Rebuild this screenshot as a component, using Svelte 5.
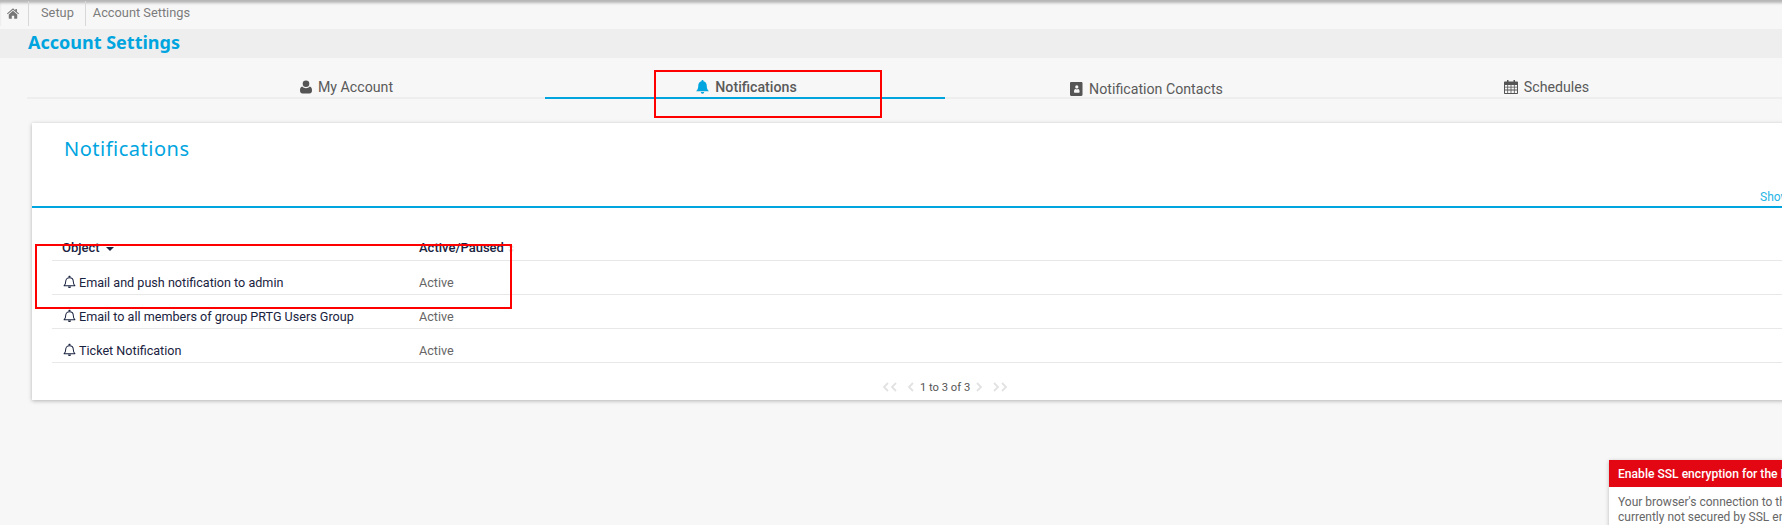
<script>
	const tabs = [
		{ label: 'My Account', icon: 'user' },
		{ label: 'Notifications', icon: 'bell', active: true },
		{ label: 'Notification Contacts', icon: 'contacts' },
		{ label: 'Schedules', icon: 'calendar' }
	];

	const rows = [
		'Email and push notification to admin',
		'Email to all members of group PRTG Users Group',
		'Ticket Notification'
	];
</script>

{#snippet bellOutline()}
	<svg class="row-icon" viewBox="0 0 14 14" aria-hidden="true">
		<path
			d="M1.200 11c1-.9 1.700-1.800 1.700-4.500 0-2.400 1.700-4.200 4.100-4.200s4.100 1.800 4.100 4.200c0 2.700.7 3.600 1.700 4.500z"
			fill="none"
			stroke="currentColor"
			stroke-width="1.100"
			stroke-linejoin="round"
		/>
		<path d="M7 .4a1 1 0 0 1 1 1.400H6A1 1 0 0 1 7 .4zM5.300 11.800h3.400a1.700 1.700 0 0 1-3.400 0z" fill="currentColor" />
	</svg>
{/snippet}

{#snippet chevrons(dir, count)}
	<svg class="chev" class:double={count === 2} viewBox="0 0 {count === 2 ? 15 : 7} 10" aria-hidden="true">
		{#each Array(count) as _, i}
			<path
				d={dir === 'left' ? `M${6 + i * 8} 1L${2 + i * 8} 5l4 4` : `M${1 + i * 8} 1l4 4-4 4`}
				fill="none"
				stroke="currentColor"
				stroke-width="1.800"
			/>
		{/each}
	</svg>
{/snippet}

{#snippet tabIcon(name)}
	{#if name === 'user'}
		<svg class="tab-icon" viewBox="0 0 12 14" aria-hidden="true">
			<circle cx="6" cy="3.800" r="3.300" fill="currentColor" />
			<path d="M2.200 6.600C3.200 7.700 4.500 8.200 6 8.200s2.800-.5 3.800-1.600c1.400.3 2.200 1.700 2.200 3.800 0 1.900-1 3-2.500 3h-7C1 13.400 0 12.300 0 10.400c0-2.100.8-3.500 2.200-3.800z" fill="currentColor" />
		</svg>
	{:else if name === 'bell'}
		<svg class="tab-icon bell" viewBox="0 0 13 14" aria-hidden="true">
			<path d="M6.500 0a1 1 0 0 1 1 1.200c2 .4 3.200 2 3.200 4.100 0 3.200.8 4.700 2.300 6H0c1.500-1.300 2.300-2.800 2.300-6 0-2.100 1.200-3.700 3.200-4.100a1 1 0 0 1 1-1.200zM4.800 12h3.400a1.700 1.700 0 0 1-3.400 0z" fill="currentColor" />
		</svg>
	{:else if name === 'contacts'}
		<svg class="tab-icon contacts" viewBox="0 0 13 14" aria-hidden="true">
			<path
				fill-rule="evenodd"
				d="M1.200 0h10.100c.7 0 1.200.5 1.200 1.200v11.600c0 .7-.5 1.200-1.200 1.200H1.200C.5 14 0 13.500 0 12.800V1.200C0 .5.500 0 1.200 0zM6.800 3.300a1.600 1.600 0 1 0 0 3.200 1.600 1.600 0 0 0 0-3.200zM4 9.700c0 .6.400 1 1 1h3.600c.6 0 1-.4 1-1 0-1.200-.5-2.400-1.400-2.600-.4.300-.9.500-1.400.5s-1-.2-1.400-.5C4.500 7.300 4 8.500 4 9.700z"
				fill="currentColor"
			/>
		</svg>
	{:else}
		<svg class="tab-icon calendar" viewBox="0 0 14 14" aria-hidden="true">
			<path
				fill-rule="evenodd"
				d="M3 0h1.500v1.400h5V0H11v1.400h2c.6 0 1 .4 1 1V13c0 .6-.4 1-1 1H1c-.6 0-1-.4-1-1V2.400c0-.6.400-1 1-1h2zM1 5v1.800h2.300V5zm3.100 0v1.800h2.500V5zm3.300 0v1.800h2.500V5zm3.300 0v1.800H13V5zM1 7.600v2h2.300v-2zm3.100 0v2h2.500v-2zm3.300 0v2h2.500v-2zm3.300 0v2H13v-2zM1 10.400V13h2.300v-2.600zm3.100 0V13h2.500v-2.600zm3.300 0V13h2.500v-2.600zm3.300 0V13H13v-2.600z"
				fill="currentColor"
			/>
		</svg>
	{/if}
{/snippet}

<div class="page">
	<nav class="breadcrumb">
		<svg class="home" viewBox="0 0 15 13" aria-hidden="true">
			<path d="M7.500 0l3 2.600V1h1.900v3.300L15 6.500l-.8.900-6.700-5.600L.8 7.400 0 6.500zM2.200 7.600l5.300-4.400 5.300 4.400v4.600c0 .4-.3.800-.7.800H9V9.400H6V13H2.900c-.4 0-.7-.4-.7-.8z" fill="currentColor" />
		</svg>
		<span class="crumb">Setup</span>
		<span class="crumb last">Account Settings</span>
	</nav>

	<header class="title-bar">
		<h1>Account Settings</h1>
	</header>

	<div class="tabs-wrap">
		<ul class="tabs">
			{#each tabs as tab}
				<li class="tab" class:active={tab.active} class:low={tab.icon === 'contacts'}>
					{@render tabIcon(tab.icon)}
					<span>{tab.label}</span>
				</li>
			{/each}
		</ul>
	</div>

	<section class="card">
		<h2>Notifications</h2>
		<div class="toolbar"><a href="#show">Show</a></div>

		<table>
			<thead>
				<tr>
					<th class="object">Object <span class="sort-down"></span></th>
					<th>
						Active/Paused
						<svg class="sort-both" viewBox="0 0 6 9" aria-hidden="true">
							<path d="M3 0l3 3.500H0zM3 9L0 5.500h6z" fill="currentColor" />
						</svg>
					</th>
				</tr>
			</thead>
			<tbody>
				{#each rows as row}
					<tr>
						<td class="name">{@render bellOutline()}{row}</td>
						<td class="status">Active</td>
					</tr>
				{/each}
			</tbody>
		</table>

		<div class="pager">
			{@render chevrons('left', 2)}
			<span class="gap-a">{@render chevrons('left', 1)}</span>
			<span class="count">1 to 3 of 3</span>
			{@render chevrons('right', 1)}
			<span class="gap-b">{@render chevrons('right', 2)}</span>
		</div>
	</section>

	<aside class="toast">
		<div class="toast-head">Enable SSL encryption for the PRTG web server</div>
		<p>Your browser's connection to this PRTG server is currently not secured by SSL encryption</p>
	</aside>

	<div class="mark mark-tab"></div>
	<div class="mark mark-row"></div>
</div>

<style>
	:global(body) {
		background: #f7f7f7;
		overflow: hidden;
	}

	.page {
		position: relative;
		width: 1900px;
		height: 525px;
		overflow: hidden;
		font-family: Roboto, sans-serif;
		color: #555;
	}

	.breadcrumb {
		display: flex;
		align-items: center;
		height: 26px;
		padding-left: 7px;
		font-size: 12.800px;
		color: #7c7c7c;
		box-shadow: inset 0 4px 3px -1px #b5b5b5;
	}

	.home {
		width: 12px;
		height: 11px;
		color: #777;
		margin-right: 9px;
	}

	.crumb {
		height: 25px;
		line-height: 24px;
		padding: 0 11px 0 12px;
		border-left: 1px solid #d8d8d8;
	}

	.crumb.last {
		padding-left: 7px;
	}

	.title-bar {
		margin-top: 3px;
		height: 29px;
		padding-left: 28px;
		background: #eeeeee;
	}

	h1 {
		margin: 0;
		font: 700 18px/27px 'Noto Sans', sans-serif;
		color: #00a5df;
	}

	.tabs-wrap {
		margin: 0 0 0 27px;
		width: 1836px;
	}

	.tabs {
		display: flex;
		justify-content: center;
		list-style: none;
		margin: 0;
		padding: 0;
		height: 39px;
		border-bottom: 2px solid #eeeeee;
	}

	.tab {
		width: 400px;
		height: 39px;
		display: flex;
		align-items: center;
		justify-content: center;
		gap: 6px;
		padding: 18px 0 0 3px;
		box-sizing: border-box;
		font-size: 14.200px;
		color: #5a5a5a;
	}

	.tab.active {
		height: 41px;
		border-bottom: 2px solid #00a5df;
		font-weight: 500;
	}

	.tab.active .tab-icon {
		color: #00a5df;
	}

	.tab.low {
		padding-top: 22px;
	}

	.tab-icon {
		width: 12px;
		height: 14px;
		color: #555;
		flex: none;
	}

	.tab-icon.bell {
		width: 13px;
		height: 16px;
	}

	.tab-icon.contacts {
		width: 13px;
	}

	.tab-icon.calendar {
		width: 14px;
	}

	.card {
		margin: 24px 0 0 32px;
		width: 1860px;
		height: 277px;
		background: #fff;
		box-shadow: 0 1px 4px rgba(0, 0, 0, 0.28);
	}

	h2 {
		margin: 0;
		padding: 12px 0 0 32px;
		height: 39px;
		font: 400 20px/28px 'Noto Sans', sans-serif;
		letter-spacing: 0.5px;
		color: #00a5df;
	}

	.toolbar {
		padding: 14px 0 0 1728px;
		height: 18px;
		border-bottom: 2px solid #00a5df;
		font-size: 12px;
		line-height: 18px;
	}

	.toolbar a {
		color: #25b5e6;
		text-decoration: none;
	}

	table {
		margin: 0 0 0 20px;
		width: 1820px;
		border-collapse: collapse;
		font-size: 12.600px;
	}

	th {
		height: 25px;
		padding: 27px 0 0;
		text-align: left;
		font-size: 13px;
		font-weight: 500;
		color: #1a2340;
		border-bottom: 1px solid #e8e8e8;
	}

	th.object {
		width: 357px;
		padding-left: 10px;
	}

	.sort-down {
		display: inline-block;
		margin-left: 3px;
		vertical-align: 1px;
		border-left: 4px solid transparent;
		border-right: 4px solid transparent;
		border-top: 4px solid #1a2340;
	}

	.sort-both {
		width: 6px;
		height: 9px;
		margin-left: 1px;
		vertical-align: -1px;
		color: #ddd;
	}

	td {
		height: 34px;
		padding: 9px 0 0;
		box-sizing: border-box;
		border-bottom: 1px solid #e8e8e8;
	}

	td.name {
		padding-left: 11px;
		color: #1a2340;
	}

	td.status {
		color: #666;
	}

	.row-icon {
		width: 13px;
		height: 14px;
		vertical-align: -2px;
		margin-right: 3px;
	}

	.pager {
		display: flex;
		align-items: center;
		margin-left: 850px;
		height: 48px;
		font-size: 11.200px;
		color: #555;
	}

	.pager span {
		display: flex;
	}

	.chev {
		width: 7px;
		height: 10px;
		color: #e2e2e2;
	}

	.chev.double {
		width: 15px;
	}

	.gap-a {
		margin-left: 10px;
	}

	.count {
		margin: 0 6px;
	}

	.gap-b {
		margin-left: 10px;
	}

	.toast {
		position: absolute;
		left: 1609px;
		top: 460px;
		width: 400px;
		background: #fff;
		box-shadow: 0 1px 4px rgba(0, 0, 0, 0.25);
	}

	.toast-head {
		height: 27px;
		padding-left: 9px;
		background: #e30613;
		color: #fff;
		font-size: 12.100px;
		font-weight: 500;
		line-height: 29px;
	}

	.toast p {
		margin: 0;
		padding: 8px 9px;
		width: 290px;
		font-size: 12px;
		line-height: 15px;
		color: #666;
	}

	.mark {
		position: absolute;
		border: 2px solid #f00;
		box-sizing: border-box;
	}

	.mark-tab {
		left: 654px;
		top: 70px;
		width: 228px;
		height: 48px;
	}

	.mark-row {
		left: 35px;
		top: 244px;
		width: 477px;
		height: 65px;
	}
</style>
